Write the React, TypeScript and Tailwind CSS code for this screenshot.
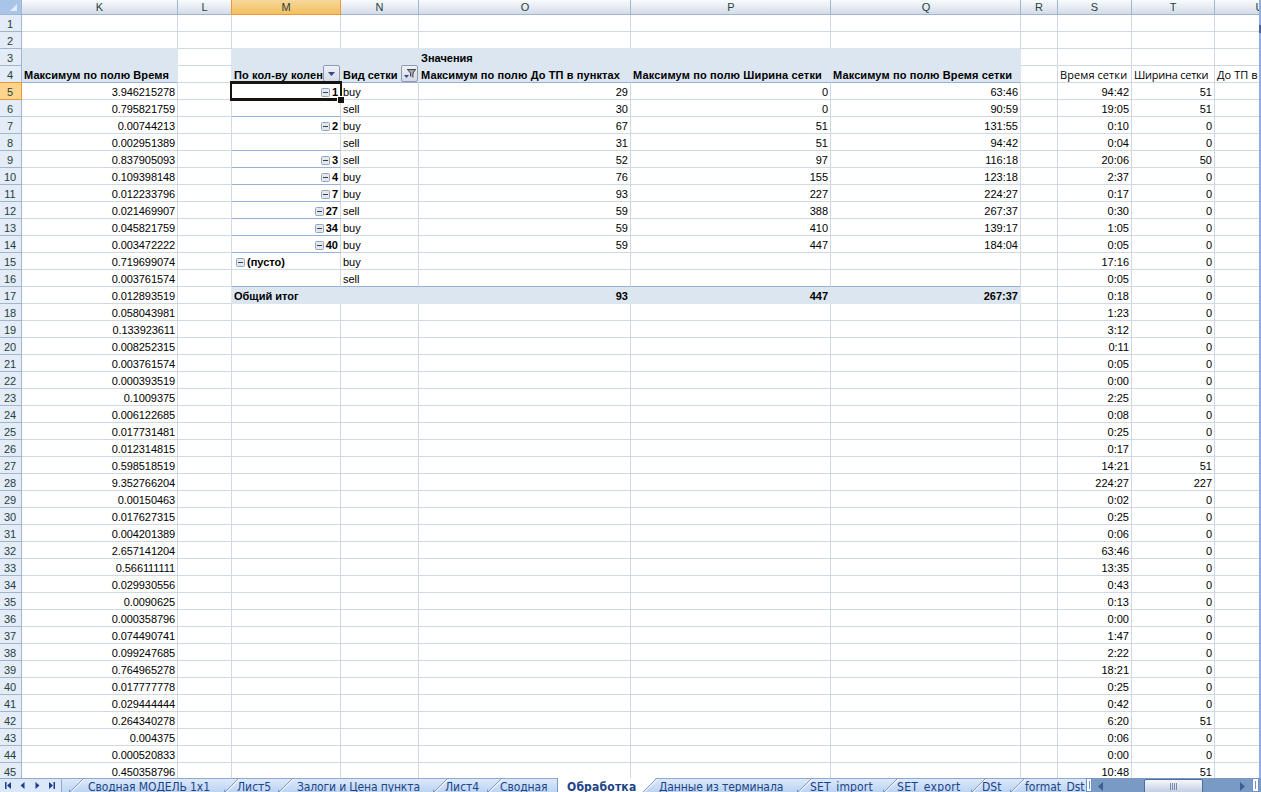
import React from 'react';
import clsx from 'clsx';

const COLS = [
  { id: 'K', w: 'w-[156px]' },
  { id: 'L', w: 'w-[54px]' },
  { id: 'M', w: 'w-[109px]' },
  { id: 'N', w: 'w-[78px]' },
  { id: 'O', w: 'w-[212px]' },
  { id: 'P', w: 'w-[200px]' },
  { id: 'Q', w: 'w-[190px]' },
  { id: 'R', w: 'w-[37px]' },
  { id: 'S', w: 'w-[74px]' },
  { id: 'T', w: 'w-[83px]' },
  { id: 'U', w: 'w-[90px]' },
];

const K = '3.946215278 0.795821759 0.00744213 0.002951389 0.837905093 0.109398148 0.012233796 0.021469907 0.045821759 0.003472222 0.719699074 0.003761574 0.012893519 0.058043981 0.133923611 0.008252315 0.003761574 0.000393519 0.1009375 0.006122685 0.017731481 0.012314815 0.598518519 9.352766204 0.00150463 0.017627315 0.004201389 2.657141204 0.566111111 0.029930556 0.0090625 0.000358796 0.074490741 0.099247685 0.764965278 0.017777778 0.029444444 0.264340278 0.004375 0.000520833 0.450358796'.split(' ');
const S = '94:42 19:05 0:10 0:04 20:06 2:37 0:17 0:30 1:05 0:05 17:16 0:05 0:18 1:23 3:12 0:11 0:05 0:00 2:25 0:08 0:25 0:17 14:21 224:27 0:02 0:25 0:06 63:46 13:35 0:43 0:13 0:00 1:47 2:22 18:21 0:25 0:42 6:20 0:06 0:00 10:48'.split(' ');
const T: Record<number, string> = { 5: '51', 6: '51', 9: '50', 27: '51', 28: '227', 42: '51', 45: '51' };

const PIVOT: Record<number, string[]> = {
  5: ['1', 'buy', '29', '0', '63:46'],
  6: ['', 'sell', '30', '0', '90:59'],
  7: ['2', 'buy', '67', '51', '131:55'],
  8: ['', 'sell', '31', '51', '94:42'],
  9: ['3', 'sell', '52', '97', '116:18'],
  10: ['4', 'buy', '76', '155', '123:18'],
  11: ['7', 'buy', '93', '227', '224:27'],
  12: ['27', 'sell', '59', '388', '267:37'],
  13: ['34', 'buy', '59', '410', '139:17'],
  14: ['40', 'buy', '59', '447', '184:04'],
  15: ['(пусто)', 'buy', '', '', ''],
  16: ['', 'sell', '', '', ''],
  17: ['Общий итог', '', '93', '447', '267:37'],
};

const HEADERS: Record<string, string> = {
  K: 'Максимум по полю Время',
  M: 'По кол-ву колен',
  N: 'Вид сетки',
  O: 'Максимум по полю До ТП в пунктах',
  P: 'Максимум по полю Ширина сетки',
  Q: 'Максимум по полю Время сетки',
  S: 'Время сетки',
  T: 'Ширина сетки',
  U: 'До ТП в',
};

const HEADER_TRACKING: Record<string, string> = {
  K: 'tracking-[0.09px]',
  M: 'tracking-[0.12px]',
  O: 'tracking-[0.11px]',
  P: 'tracking-[0.15px]',
  Q: 'tracking-[0.12px]',
  S: 'tracking-[0.08px]',
  T: 'tracking-[-0.25px]',
  U: 'tracking-[0.05px]',
};

function textOf(row: number, col: string): string {
  if (row === 3 && col === 'O') return 'Значения';
  if (row === 4) return HEADERS[col] ?? '';
  if (row < 5) return '';
  if (col === 'K') return K[row - 5];
  if (col === 'S') return S[row - 5];
  if (col === 'T') return T[row] ?? '0';
  const i = 'MNOPQ'.indexOf(col);
  return i >= 0 && PIVOT[row] ? PIVOT[row][i] : '';
}

const isPivot = (col: string) => col !== '' && 'MNOPQ'.includes(col);
const isFilled = (row: number, col: string) =>
  ((row === 3 || row === 4) && (col === 'K' || isPivot(col))) || (row === 17 && isPivot(col));

function Collapse() {
  return (
    <svg width="9" height="9" viewBox="0 0 9 9" className="shrink-0">
      <rect x="0.5" y="0.5" width="8" height="8" rx="1" fill="#e3e7ee" stroke="#98a5b9" />
      <path d="M2 4.5h5" stroke="#33415f" />
    </svg>
  );
}

function FilterButton({ funnel }: { funnel?: boolean }) {
  return (
    <svg width="17" height="17" viewBox="0 0 17 17" className="absolute right-0 -top-px">
      <defs>
        <linearGradient id="btn" x1="0" y1="0" x2="0" y2="1">
          <stop offset="0" stopColor="#eff2f7" />
          <stop offset="1" stopColor="#d6dae2" />
        </linearGradient>
      </defs>
      <rect x="0.5" y="0.5" width="16" height="16" rx="1.5" fill="url(#btn)" stroke="#8c9bb0" />
      {funnel ? (
        <>
          <path d="M3 10h5l-2.500 3z" fill="#33479a" />
          <path d="M6 4h9.500l-3.500 4v4.500l-2.500-1.500v-3z" fill="#a3a7ac" />
          <path d="M6 4.500h9M6.500 4.500l3 3.500v3.500M14.500 4.500L12 8v4.500" fill="none" stroke="#44484e" />
        </>
      ) : (
        <path d="M5 7h7l-3.500 4z" fill="#33479a" />
      )}
    </svg>
  );
}

function Cell({ row, col, w }: { row: number; col: string; w: string }) {
  const text = textOf(row, col);
  const next = COLS[COLS.findIndex((c) => c.id === col) + 1]?.id ?? '';
  const filled = isFilled(row, col);
  const blueBottom =
    (row === 4 && filled) || (row === 16 && isPivot(col)) ||
    (col === 'M' && [6, 8, 9, 10, 11, 12, 13, 14].includes(row));
  const left = row <= 4 || col === 'N' || (col === 'M' && row >= 15);
  const bold = (row <= 4 && !'STU'.includes(col)) || (row === 17 && isPivot(col)) || col === 'M';
  const labelFont = 'STU'.includes(col) && row === 4;
  const group = col === 'M' && row >= 5 && row <= 15 && text !== '';
  return (
    <div
      className={clsx(
        'relative flex h-[17px] shrink-0 items-center whitespace-nowrap border-b border-r text-[11px] leading-[16px]',
        w,
        filled ? 'bg-[#dce6f1]' : 'bg-white',
        filled || isFilled(row, next) ? 'border-r-[#dce6f1]' : 'border-r-[#d0d7e5]',
        blueBottom ? 'border-b-[#95b3d7]' : filled || isFilled(row + 1, col) ? 'border-b-[#dce6f1]' : 'border-b-[#d0d7e5]',
        left ? 'justify-start pl-[2px]' : 'justify-end pr-[2px]',
        bold && 'font-bold',
        row === 4 && HEADER_TRACKING[col],
        row > 4 && col === 'K' && 'tracking-[-0.09px]',
        labelFont && "font-['Open_Sans']",
        row === 5 && col === 'M' && 'z-10',
      )}
    >
      {group && <span className={clsx('relative top-px flex', row === 15 ? 'ml-[2px] mr-[2px]' : 'mr-[2px]')}><Collapse /></span>}
      <span className="relative top-px">{text}</span>
      {row === 4 && col === 'M' && <FilterButton />}
      {row === 4 && col === 'N' && <FilterButton funnel />}
      {row === 5 && col === 'M' && (
        <>
          <div className="absolute -left-[2px] -top-[2px] h-[20px] w-[112px] border-x-[2px] border-b-[3px] border-t-[3px] border-[#17130f]" />
          <div className="absolute -bottom-[4px] -right-[4px] size-[7px] border-l border-t border-white bg-[#17130f]" />
        </>
      )}
    </div>
  );
}

function Slant({ active }: { active?: boolean }) {
  return (
    <svg width="16" height="14" viewBox="0 0 16 14" className="-mr-[4px] -mt-px shrink-0">
      {active && <path d="M0 0H14L1 14H0z" fill="#fff" />}
      <path d="M1 14L14.500 0.500H16" fill="none" stroke="#8399c4" />
      <path d="M2.500 14L15.500 1" fill="none" stroke="#fff" />
      {!active && <path d="M0 14V11l2 3z" fill="#7d95c3" />}
    </svg>
  );
}

const TABS = [
  { t: 'Сводная МОДЕЛЬ 1x1', w: 'w-[155px]', text: 'pl-[7px] tracking-[-0.1px]' },
  { t: 'Лист5', w: 'w-[54px]', text: 'pl-[1px]' },
  { t: 'Залоги и Цена пункта', w: 'w-[155px]', text: 'pl-[7px] tracking-[-0.14px]' },
  { t: 'Лист4', w: 'w-[54px]', text: 'pl-0' },
  { t: 'Сводная', w: 'w-[71px]', text: 'pl-[1px] tracking-[-0.1px]' },
  { t: 'Обработка', w: 'w-[84px]', text: 'pl-[9px] tracking-[0.2px]' },
  { t: 'Данные из терминала', w: 'w-[155px]', text: 'pl-[5px] tracking-[-0.1px]' },
  { t: 'SET_import', w: 'w-[86px]', text: 'pl-[1px] tracking-[0.15px]' },
  { t: 'SET_export', w: 'w-[88px]', text: 'pl-[2px] tracking-[0.3px]' },
  { t: 'DSt', w: 'w-[39px]', text: '-ml-px' },
  { t: 'format_Dst', w: 'w-[77px]', text: 'pl-[3px]' },
];

function TabBar() {
  return (
    <div className="flex h-[14px] w-[1261px] overflow-hidden font-['DejaVu_Sans_Condensed'] text-[12px] text-[#1c4387]">
      <svg width="62" height="14" viewBox="0 0 62 14" className="shrink-0 bg-[#dbe8fa]">
        <path d="M0 0.500H61.500V14" fill="none" stroke="#8fa9d0" />
        <g fill="#1f3f86">
          <path d="M5 4h1.500v7H5zM11 4v7L7 7.500zM24.500 4v7l-4-3.500zM35.500 4v7l4-3.500zM49 4v7l4-3.500zM53.500 4H55v7h-1.500z" />
        </g>
      </svg>
      <div className="flex w-[1024px] shrink-0 overflow-hidden">
        <div className="w-[7px] shrink-0 border-t border-[#8fa9d0] bg-gradient-to-b from-[#dce9fa] to-[#c0d7f5]" />
        {TABS.map((tab, i) => (
          <div
            key={tab.t}
            className={clsx(
              'flex h-[14px] shrink-0 border-t',
              tab.w,
              i === 5 ? 'border-white bg-white' : 'border-[#8fa9d0] bg-gradient-to-b from-[#dce9fa] to-[#bcd4f4]',
              i === 4 && 'border-r border-r-[#7d95c3]',
            )}
          >
            {i !== 5 && <Slant active={i === 6} />}
            <div className={clsx('h-[13px] whitespace-nowrap leading-[16px]', tab.text, i === 5 && 'font-bold')}>
              {tab.t}
            </div>
          </div>
        ))}
      </div>
      <div className="flex w-[175px] shrink-0 bg-[#7a9ac6]">
        <div className="flex h-[14px] w-[6px] justify-center border border-[#6f93c5] bg-white pt-[2px]">
          <div className="h-[8px] w-px bg-[#6f93c5]" />
        </div>
        <svg width="160" height="14" viewBox="0 0 160 14">
          <defs>
            <linearGradient id="thumb" x1="0" y1="0" x2="0" y2="1">
              <stop offset="0" stopColor="#f7f9fc" />
              <stop offset="1" stopColor="#bccadf" />
            </linearGradient>
          </defs>
          <path d="M11 4v9L6 8.500zM148 4v9l5-4.500z" fill="#3d5d93" />
          <rect x="52.500" y="1.500" width="58" height="14" rx="1.500" fill="url(#thumb)" stroke="#4d6d9f" />
          <path d="M78.500 5v7M80.500 5v7M82.500 5v7M84.500 5v7" stroke="#7588a8" />
        </svg>
        <div className="flex h-[14px] w-[7px] justify-center border border-[#6f93c5] bg-white pt-[2px]">
          <div className="h-[8px] w-px bg-[#6f93c5]" />
        </div>
      </div>
    </div>
  );
}

export default function App() {
  return (
    <div className="h-[792px] w-[1261px] overflow-hidden bg-white font-['Liberation_Sans',sans-serif] text-black">
      <div className="flex h-[778px] w-[1261px]">
        <div className="w-[1259px] overflow-hidden">
          <div className="flex h-[15px] text-[11px] leading-[14px] text-[#27413e]">
            <div className="flex w-[22px] shrink-0 items-end justify-end border-b border-r border-[#9eb6ce] bg-[#a9c4e9] pb-[3px] pr-[4px]">
              <svg width="7" height="7" viewBox="0 0 7 7"><path d="M7 0v7H0z" fill="#e4ecf7" /></svg>
            </div>
            {COLS.map((c) => (
              <div
                key={c.id}
                className={clsx(
                  'shrink-0 border-b border-r text-center',
                  c.w,
                  c.id === 'M'
                    ? 'border-[#f29536] bg-gradient-to-b from-[#f8d79b] to-[#f1c15f]'
                    : 'border-[#9eb6ce] bg-gradient-to-b from-[#f9fcfd] to-[#d3dbe9]',
                  c.id === 'L' && 'border-r-[#f29536]',
                  'OPQ'.includes(c.id) && 'pl-px',
                )}
              >
                {c.id}
              </div>
            ))}
          </div>
          {Array.from({ length: 45 }, (_, i) => i + 1).map((row) => (
            <div key={row} className="flex h-[17px]">
              <div
                className={clsx(
                  'h-[17px] w-[22px] shrink-0 border-b border-r pr-px text-center text-[11px] leading-[18px] text-[#27413e]',
                  row === 5 ? 'border-[#f29536] bg-[#ffd58d]' : 'border-[#9eb6ce] bg-[#e4ecf7]',
                  row === 4 && 'border-b-[#f29536]',
                )}
              >
                {row}
              </div>
              {COLS.map((c) => <Cell key={c.id} row={row} col={c.id} w={c.w} />)}
            </div>
          ))}
        </div>
        <div className="flex w-[2px] flex-col bg-[#8fb0dc] pt-[25px]">
          <div className="h-[8px] bg-[#4a6490]" />
        </div>
      </div>
      <TabBar />
    </div>
  );
}
